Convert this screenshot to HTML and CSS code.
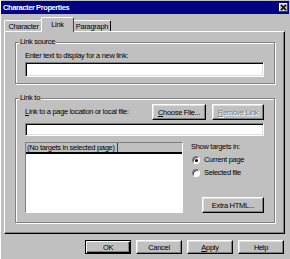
FILE: index.html
```html
<!DOCTYPE html>
<html lang="en">
<head>
    <meta charset="UTF-8">
    <title>Character Properties</title>
    <link rel="stylesheet" href="styles.css">
</head>
<body>
    <div class="window">
        <div class="titlebar">
            <span class="title">Character Properties</span>
            <span class="close">
                <svg width="7" height="7" viewBox="0 0 7 7"><path d="M1 1L6 6M6 1L1 6" stroke="#000" stroke-width="1.6"/></svg>
            </span>
        </div>
        <div class="tabs">
            <div class="tab tab-char">Character</div>
            <div class="tab tab-link">Link</div>
            <div class="tab tab-para">Paragraph</div>
        </div>
        <div class="panel">
            <div class="group group-source">
                <span class="legend">Link source</span>
                <div class="label">Enter text to display for a new link:</div>
                <div class="field"></div>
            </div>
            <div class="group group-link">
                <span class="legend">Link to</span>
                <div class="row">
                    <span class="label grow"><u>L</u>ink to a page location or local file:</span>
                    <span class="btn btn-choose"><u>C</u>hoose File...</span>
                    <span class="btn btn-remove disabled"><u>R</u>emove Link</span>
                </div>
                <div class="field field-small"></div>
                <div class="lower">
                    <div class="list">
                        <div class="list-head"><span class="col">(No targets in selected page)</span></div>
                        <div class="list-body"></div>
                    </div>
                    <div class="side">
                        <div class="label">Show targets in:</div>
                        <div class="option"><span class="radio checked"></span>Current page</div>
                        <div class="option"><span class="radio"></span>Selected file</div>
                        <span class="btn btn-extra">Extra HTML...</span>
                    </div>
                </div>
            </div>
        </div>
        <div class="buttons">
            <span class="btn btn-default">OK</span>
            <span class="btn">Cancel</span>
            <span class="btn"><u>A</u>pply</span>
            <span class="btn">Help</span>
        </div>
    </div>
</body>
</html>
```

FILE: styles.css
```css
body {
    margin: 0;
    background-color: #c0c0c0;
    font-family: "Liberation Sans", Arial, sans-serif;
    font-size: 7.5px;
    letter-spacing: -0.3px;
    color: #000;
}
.window {
    width: 290px;
    height: 259px;
    box-sizing: border-box;
    border-left: 1px solid #fff;
    padding-top: 1px;
    overflow: hidden;
}
.titlebar {
    height: 13px;
    margin-right: 1px;
    padding: 0 1px 0 2px;
    background-color: #000080;
    color: #fff;
    font-weight: bold;
    letter-spacing: -0.4px;
    display: flex;
    align-items: center;
    justify-content: space-between;
}
.close {
    width: 9px;
    height: 9px;
    box-sizing: border-box;
    background-color: #c0c0c0;
    box-shadow: inset -1px -1px #404040, inset 1px 1px #fff;
    display: flex;
    align-items: center;
    justify-content: center;
}
.close svg {
    display: block;
}

/* tabs */
.tabs {
    height: 14px;
    margin-top: 3px;
    padding-left: 3px;
    display: flex;
    align-items: flex-end;
}
.tab {
    height: 11px;
    box-sizing: border-box;
    border: 1px solid;
    border-color: #fff #404040 transparent #fff;
    border-bottom: none;
    border-radius: 2px 2px 0 0;
    display: flex;
    align-items: center;
    justify-content: center;
}
.tab-char {
    width: 39px;
}
.tab-link {
    width: 33px;
    height: 15px;
    margin: 0 -1px -1px -2px;
    background-color: #c0c0c0;
    position: relative;
    z-index: 1;
    padding-bottom: 2px;
}
.tab-para {
    width: 38px;
    border-right-color: #000;
}

/* panel */
.panel {
    width: 281px;
    height: 203px;
    margin-left: 3px;
    box-sizing: border-box;
    border-top: 1px solid #fff;
    border-left: 1px solid #fff;
    border-right: 1px solid #000;
    border-bottom: 1px solid #000;
    box-shadow: inset -1px -1px #808080;
    padding: 10px 0 0 10px;
}
.group {
    position: relative;
    width: 260px;
    box-sizing: border-box;
    border: 1px solid #808080;
    box-shadow: inset 1px 1px #fff, 1px 1px #fff;
    padding-left: 9px;
}
.legend {
    position: absolute;
    top: -6px;
    left: 3px;
    padding: 0 1px;
    line-height: 10px;
    background-color: #c0c0c0;
}
.group-source {
    height: 42px;
    padding-top: 8px;
}
.group-link {
    height: 125px;
    margin-top: 14px;
    padding-top: 5px;
}
.label {
    line-height: 10px;
    height: 10px;
}
.group-source .label {
    margin-bottom: 1px;
}
.field {
    width: 239px;
    height: 15px;
    box-sizing: border-box;
    background-color: #fff;
    border-top: 1px solid #808080;
    border-left: 1px solid #808080;
    border-right: 1px solid #fff;
    border-bottom: 1px solid #fff;
    box-shadow: inset 1px 1px #000, inset -1px -1px #dfdfdf;
}
.field-small {
    height: 13px;
    margin-top: 3px;
}
.row {
    width: 239px;
    height: 16px;
    display: flex;
    align-items: center;
}
.grow {
    flex-grow: 1;
}

/* buttons */
.btn {
    height: 16px;
    box-sizing: border-box;
    background-color: #c0c0c0;
    border: 1px solid;
    border-color: #fff #000 #000 #fff;
    box-shadow: inset -1px -1px #808080, inset 1px 1px #dfdfdf;
    display: flex;
    align-items: center;
    justify-content: center;
    white-space: nowrap;
}
.btn-choose {
    width: 54px;
}
.btn-remove {
    width: 52px;
    margin-left: 6px;
}
.disabled {
    color: #808080;
    text-shadow: 1px 1px 0 #fff;
}
.btn-extra {
    width: 62px;
    margin-top: auto;
    align-self: flex-end;
}

/* targets */
.lower {
    width: 239px;
    height: 71px;
    margin-top: 6px;
    display: flex;
    justify-content: space-between;
}
.list {
    width: 158px;
    box-sizing: border-box;
    border-top: 1px solid #808080;
    border-left: 1px solid #808080;
    border-right: 1px solid #fff;
    border-bottom: 1px solid #fff;
    display: flex;
    flex-direction: column;
}
.list-head {
    height: 11px;
    box-sizing: border-box;
    border-bottom: 2px solid #000;
    display: flex;
}
.col {
    padding: 0 2px 0 1px;
    line-height: 9px;
    border-right: 1px solid #404040;
}
.list-body {
    flex-grow: 1;
    background-color: #fff;
}
.side {
    width: 73px;
    display: flex;
    flex-direction: column;
}
.side .label {
    margin-bottom: 1px;
}
.option {
    height: 13px;
    display: flex;
    align-items: center;
}
.radio {
    width: 8px;
    height: 8px;
    margin: 0 4px 0 1px;
    box-sizing: border-box;
    border-radius: 50%;
    background-color: #fff;
    border: 1px solid;
    border-color: #808080 #fff #fff #808080;
    box-shadow: inset 1px 1px #404040;
    position: relative;
}
.radio.checked::after {
    content: "";
    position: absolute;
    left: 2px;
    top: 2px;
    width: 3px;
    height: 3px;
    border-radius: 50%;
    background-color: #000;
}

/* dialog buttons */
.buttons {
    margin-top: 6px;
    padding-left: 84px;
    display: flex;
    gap: 5px;
}
.buttons .btn {
    width: 46px;
    height: 14px;
}
.btn-default {
    border-color: #000;
    box-shadow: inset 1px 1px #fff, inset -1px -1px #000, inset -2px -2px #808080;
}
```
